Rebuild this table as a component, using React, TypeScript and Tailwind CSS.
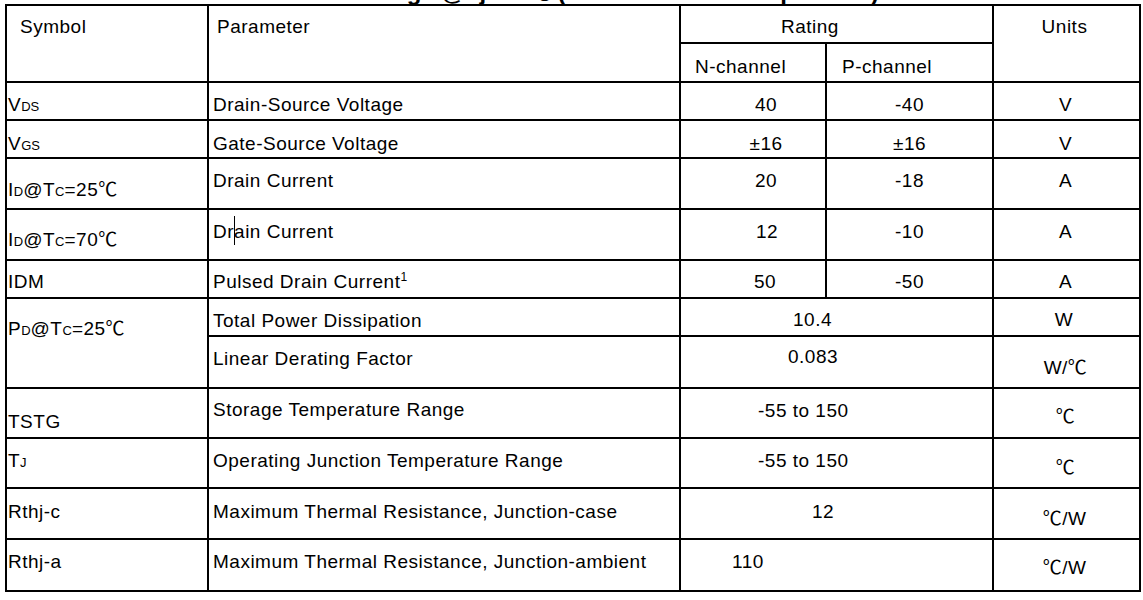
import React from "react";

const cell = "border-2 border-black align-top p-0";

function Sub({ children }: { children: React.ReactNode }) {
  return <span className="text-[13px] tracking-normal">{children}</span>;
}

export default function App() {
  return (
    <div className="w-[1143px] h-[600px] bg-white text-black overflow-hidden font-['Liberation_Sans','Noto_Sans_CJK_SC',sans-serif]">
      <div className="h-[4px] overflow-hidden">
        <div className="-mt-[20px] pl-[120px] text-[24px] leading-[24px] font-bold whitespace-nowrap">
          Absolute Maximum Ratings @Tj=25℃ (unless otherwise specified)
        </div>
      </div>
      <table className="ml-[5px] w-[1134px] table-fixed border-collapse text-[19px] leading-[22px] tracking-[0.5px]">
        <colgroup>
          <col className="w-[202px]" />
          <col className="w-[472px]" />
          <col className="w-[146px]" />
          <col className="w-[167px]" />
          <col className="w-[147px]" />
        </colgroup>
        <tbody>
          <tr className="h-[38px]">
            <td rowSpan={2} className={`${cell} pt-[10px] pl-[13px]`}>Symbol</td>
            <td rowSpan={2} className={`${cell} pt-[10px] pl-[8px]`}>Parameter</td>
            <td colSpan={2} className={`${cell} pt-[10px] pl-[100px]`}>Rating</td>
            <td rowSpan={2} className={`${cell} pt-[10px] pr-[4px] text-center`}>Units</td>
          </tr>
          <tr className="h-[39px]">
            <td className={`${cell} pt-[12px] pl-[14px]`}>N-channel</td>
            <td className={`${cell} pt-[12px] pl-[15px]`}>P-channel</td>
          </tr>

          <tr className="h-[38px]">
            <td className={`${cell} pt-[11px] pl-[1px]`}>V<Sub>DS</Sub></td>
            <td className={`${cell} pt-[11px] pl-[4px]`}>Drain-Source Voltage</td>
            <td className={`${cell} pt-[11px] pl-[26px] text-center`}>40</td>
            <td className={`${cell} pt-[11px] text-center`}>-40</td>
            <td className={`${cell} pt-[11px] pr-[2px] text-center`}>V</td>
          </tr>
          <tr className="h-[38px]">
            <td className={`${cell} pt-[12px] pl-[1px]`}>V<Sub>GS</Sub></td>
            <td className={`${cell} pt-[12px] pl-[4px]`}>Gate-Source Voltage</td>
            <td className={`${cell} pt-[12px] pl-[26px] text-center`}>±16</td>
            <td className={`${cell} pt-[12px] text-center`}>±16</td>
            <td className={`${cell} pt-[12px] pr-[2px] text-center`}>V</td>
          </tr>
          <tr className="h-[51px]">
            <td className={`${cell} pt-[20px] pl-[1px]`}>I<Sub>D</Sub>@T<Sub>C</Sub>=25℃</td>
            <td className={`${cell} pt-[11px] pl-[4px]`}>Drain Current</td>
            <td className={`${cell} pt-[11px] pl-[26px] text-center`}>20</td>
            <td className={`${cell} pt-[11px] text-center`}>-18</td>
            <td className={`${cell} pt-[11px] pr-[2px] text-center`}>A</td>
          </tr>
          <tr className="h-[51px]">
            <td className={`${cell} pt-[19px] pl-[1px]`}>I<Sub>D</Sub>@T<Sub>C</Sub>=70℃</td>
            <td className={`${cell} pt-[11px] pl-[4px]`}>
              Dr
              <span className="relative">
                <span className="absolute left-0 top-[-5px] h-[29px] w-px bg-black" />
              </span>
              ain Current
            </td>
            <td className={`${cell} pt-[11px] pl-[28px] text-center`}>12</td>
            <td className={`${cell} pt-[11px] text-center`}>-10</td>
            <td className={`${cell} pt-[11px] pr-[2px] text-center`}>A</td>
          </tr>
          <tr className="h-[38px]">
            <td className={`${cell} pt-[10px] pl-[1px]`}>IDM</td>
            <td className={`${cell} pt-[10px] pl-[4px]`}>
              Pulsed Drain Current
              <span className="relative -top-[7px] text-[12px] leading-none tracking-normal">1</span>
            </td>
            <td className={`${cell} pt-[10px] pl-[24px] text-center`}>50</td>
            <td className={`${cell} pt-[10px] text-center`}>-50</td>
            <td className={`${cell} pt-[10px] pr-[2px] text-center`}>A</td>
          </tr>
          <tr className="h-[38px]">
            <td rowSpan={2} className={`${cell} pt-[19px] pl-[1px]`}>P<Sub>D</Sub>@T<Sub>C</Sub>=25℃</td>
            <td className={`${cell} pt-[11px] pl-[4px]`}>Total Power Dissipation</td>
            <td colSpan={2} className={`${cell} pt-[10px] pl-[112px]`}>10.4</td>
            <td className={`${cell} pt-[10px] pr-[5px] text-center`}>W</td>
          </tr>
          <tr className="h-[52px]">
            <td className={`${cell} pt-[11px] pl-[4px]`}>Linear Derating Factor</td>
            <td colSpan={2} className={`${cell} pt-[9px] pl-[107px]`}>0.083</td>
            <td className={`${cell} pt-[20px] pr-[2px] text-center`}>W/℃</td>
          </tr>
          <tr className="h-[50px]">
            <td className={`${cell} pt-[22px] pl-[1px]`}>TSTG</td>
            <td className={`${cell} pt-[10px] pl-[4px]`}>Storage Temperature Range</td>
            <td colSpan={2} className={`${cell} pt-[11px] pl-[77px]`}>-55 to 150</td>
            <td className={`${cell} pt-[17px] pr-[2px] text-center`}>℃</td>
          </tr>
          <tr className="h-[50px]">
            <td className={`${cell} pt-[11px] pl-[1px]`}>T<Sub>J</Sub></td>
            <td className={`${cell} pt-[11px] pl-[4px]`}>Operating Junction Temperature Range</td>
            <td colSpan={2} className={`${cell} pt-[11px] pl-[77px]`}>-55 to 150</td>
            <td className={`${cell} pt-[18px] pr-[2px] text-center`}>℃</td>
          </tr>
          <tr className="h-[51px]">
            <td className={`${cell} pt-[12px] pl-[1px]`}>Rthj-c</td>
            <td className={`${cell} pt-[12px] pl-[4px]`}>Maximum Thermal Resistance, Junction-case</td>
            <td colSpan={2} className={`${cell} pt-[12px] pl-[131px]`}>12</td>
            <td className={`${cell} pt-[19px] pr-[4px] text-center`}>℃/W</td>
          </tr>
          <tr className="h-[52px]">
            <td className={`${cell} pt-[11px] pl-[1px]`}>Rthj-a</td>
            <td className={`${cell} pt-[11px] pl-[4px]`}>Maximum Thermal Resistance, Junction-ambient</td>
            <td colSpan={2} className={`${cell} pt-[11px] pl-[51px]`}>110</td>
            <td className={`${cell} pt-[17px] pr-[4px] text-center`}>℃/W</td>
          </tr>
        </tbody>
      </table>
    </div>
  );
}
